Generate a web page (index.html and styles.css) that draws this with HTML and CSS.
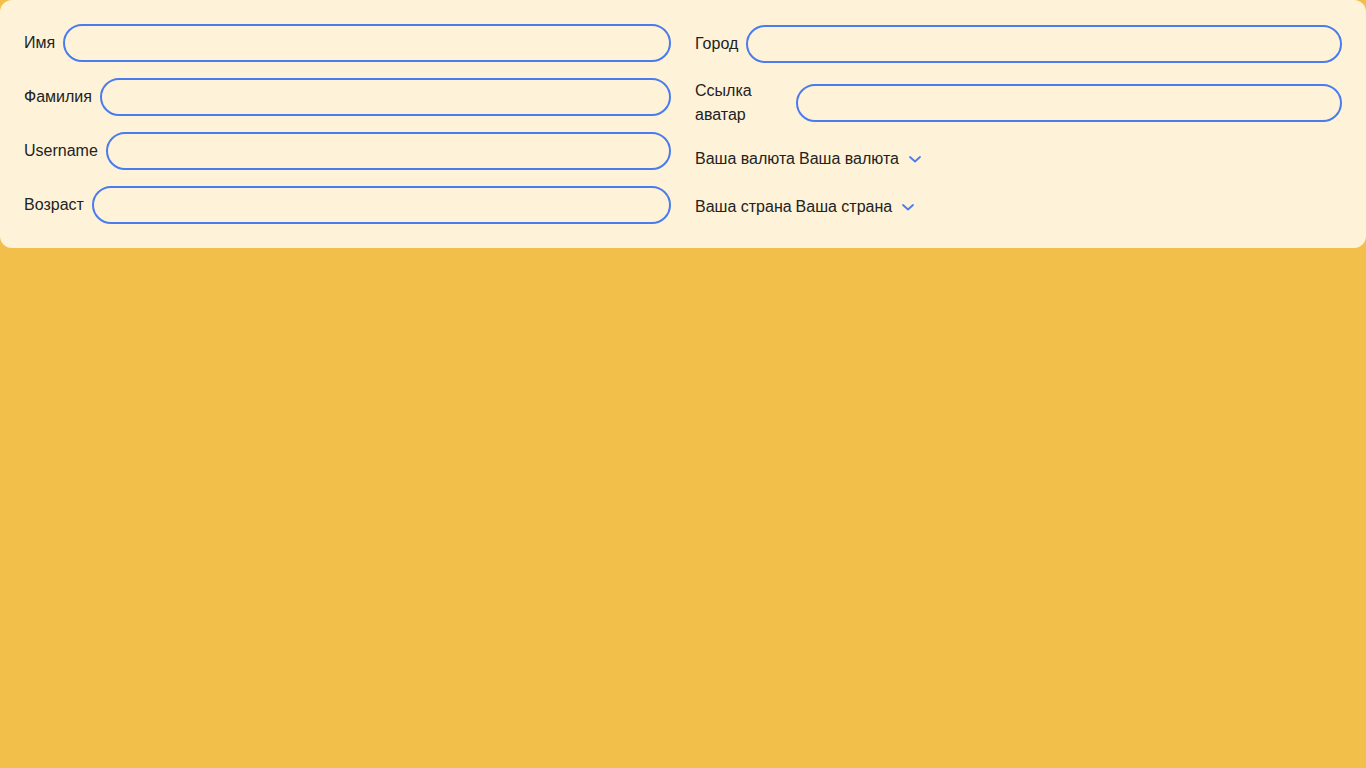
FILE: index.html
```html
<!DOCTYPE html>
<html lang="ru">
<head>
<meta charset="utf-8">
<title>Профиль</title>
<link rel="stylesheet" href="styles.css">
</head>
<body>
<form class="card">
  <div class="col">
    <label class="row row-input"><span class="lbl">Имя</span><input class="field" type="text"></label>
    <label class="row row-input"><span class="lbl">Фамилия</span><input class="field" type="text"></label>
    <label class="row row-input"><span class="lbl">Username</span><input class="field" type="text"></label>
    <label class="row row-input"><span class="lbl">Возраст</span><input class="field" type="text"></label>
  </div>
  <div class="col">
    <label class="row row-input row-first"><span class="lbl">Город</span><input class="field" type="text"></label>
    <label class="row row-tall"><span class="lbl lbl-wrap">Ссылка аватар</span><input class="field" type="text"></label>
    <div class="row row-select"><span class="lbl">Ваша валюта</span><span class="select">Ваша валюта<svg class="chev" width="12" height="7" viewBox="0 0 12 7"><path d="M1 1l5 4.5L11 1" fill="none" stroke="#4a7bef" stroke-width="1.8" stroke-linecap="round" stroke-linejoin="round"/></svg></span></div>
    <div class="row row-select"><span class="lbl">Ваша страна</span><span class="select">Ваша страна<svg class="chev" width="12" height="7" viewBox="0 0 12 7"><path d="M1 1l5 4.5L11 1" fill="none" stroke="#4a7bef" stroke-width="1.8" stroke-linecap="round" stroke-linejoin="round"/></svg></span></div>
  </div>
</form>
</body>
</html>
```

FILE: styles.css
```css
html, body {
  margin: 0;
  padding: 0;
}
body {
  background: #f2c04a;
  font-family: "Liberation Sans", Arial, sans-serif;
  font-size: 16px;
  color: #222222;
  min-height: 768px;
}
.card {
  margin: 0;
  background: #fef3d8;
  border-radius: 12px;
  padding: 24px;
  display: grid;
  grid-template-columns: 1fr 1fr;
  column-gap: 24px;
  box-sizing: border-box;
  width: 1366px;
}
.col {
  display: flex;
  flex-direction: column;
  gap: 16px;
}
.row {
  display: flex;
  align-items: center;
  gap: 8px;
}
.row-input {
  height: 38px;
}
.row-first {
  margin-top: 1px;
  margin-bottom: -1px;
}
.lbl {
  line-height: 24px;
  white-space: nowrap;
  flex: none;
}
.lbl-wrap {
  white-space: normal;
  width: 93px;
}
.row-tall {
  height: 48px;
  padding-top: 1px;
  box-sizing: border-box;
}
.field {
  flex: 1;
  min-width: 0;
  height: 38px;
  box-sizing: border-box;
  border: 2px solid #4a7bef;
  border-radius: 19px;
  background: transparent;
  padding: 0 16px;
  font: inherit;
  outline: none;
}
.row-select {
  height: 32px;
  gap: 4px;
}
.row-select .lbl,
.select {
  padding-top: 2px;
}
.select {
  display: inline-flex;
  align-items: center;
  gap: 10px;
  line-height: 24px;
}
.chev {
  display: block;
}
```
